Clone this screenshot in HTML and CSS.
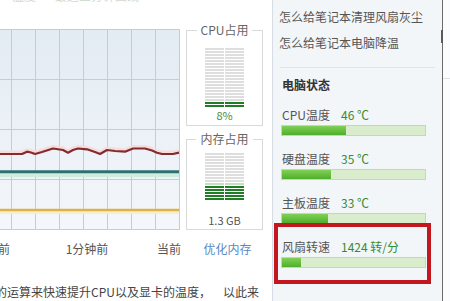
FILE: index.html
```html
<!DOCTYPE html>
<html lang="zh-CN">
<head>
<meta charset="utf-8">
<title>温度监控</title>
<link rel="stylesheet" href="styles.css">
</head>
<body>
<div class="window">
  <div class="main">
    <div class="caption"><div class="caption-text"><span class="caption-a">温度</span><span class="caption-b">最近三分钟曲线</span></div></div>
    <div class="monitor">
      <div class="chart">
        <svg class="chart-svg" width="180" height="201" viewBox="0 0 180 201">
          <defs>
            <linearGradient id="chartBg" x1="0" y1="0" x2="0" y2="1">
              <stop offset="0" stop-color="#e2ecf2"/>
              <stop offset="0.6" stop-color="#edf2f8"/>
              <stop offset="1" stop-color="#f4f7fb"/>
            </linearGradient>
          </defs>
          <rect width="180" height="201" fill="url(#chartBg)"/>
          <path d="M0 0.5H180M0 50.5H180M0 100.5H180M0 150.5H180M0 200.5H180M11.5 0V201M35.5 0V201M59.5 0V201M83.5 0V201M107.5 0V201M131.5 0V201M155.5 0V201M179.5 0V201" stroke="#c2cdd6" stroke-width="1" fill="none"/>
          <rect x="0" y="144" width="179" height="4" fill="#d0ecdd"/>
          <path d="M0 142.7H179" stroke="#2f7074" stroke-width="3"/>
          <rect x="0" y="182" width="179" height="3" fill="#f6edcc"/>
          <path d="M0 181H179" stroke="#ddb24a" stroke-width="2.4"/>
          <polyline fill="none" stroke="#f7dcdc" stroke-width="3" stroke-linejoin="round" transform="translate(0 -2)" points="0,125 22,125 27,122.7 31,123.5 35,125 42,123 53,119.5 63,121 68,123.7 73,121 78,119.5 87,120.3 95,123 100,125 107,121 115,122 125,122.7 133,119.5 145,119.5 152,121.5 157,123.7 162,125 173,125 179,123.7"/>
          <polyline fill="none" stroke="#852a2d" stroke-width="2.2" stroke-linejoin="round" points="0,125 22,125 27,122.7 31,123.5 35,125 42,123 53,119.5 63,121 68,123.7 73,121 78,119.5 87,120.3 95,123 100,125 107,121 115,122 125,122.7 133,119.5 145,119.5 152,121.5 157,123.7 162,125 173,125 179,123.7"/>
        </svg>
      </div>
      <div class="meters">
        <fieldset class="meter meter-cpu">
          <legend>CPU占用</legend>
          <div class="bars bars-cpu">
            <div class="bar-col"><div class="bar-used" style="height:6px"></div></div>
            <div class="bar-col"><div class="bar-used" style="height:6px"></div></div>
          </div>
          <div class="meter-value meter-value-cpu">8%</div>
        </fieldset>
        <fieldset class="meter meter-mem">
          <legend>内存占用</legend>
          <div class="bars bars-mem">
            <div class="bar-col"><div class="bar-used bar-used-partial" style="height:18px"></div></div>
            <div class="bar-col"><div class="bar-used bar-used-partial" style="height:18px"></div></div>
          </div>
          <div class="meter-value meter-value-mem">1.3 GB</div>
        </fieldset>
      </div>
    </div>
    <div class="axis">
      <span class="axis-t1">2分钟前</span>
      <span class="axis-t2">1分钟前</span>
      <span class="axis-t3">当前</span>
      <a class="axis-link" href="#">优化内存</a>
    </div>
    <p class="desc">的运算来快速提升CPU以及显卡的温度，<span class="desc-tail">以此来</span></p>
  </div>
  <aside class="side">
    <div class="tips">
      <a href="#">怎么给笔记本清理风扇灰尘</a>
      <a href="#">怎么给笔记本电脑降温</a>
    </div>
    <div class="sep"></div>
    <div class="status">
      <h3 class="status-title">电脑状态</h3>
      <div class="stat">
        <div class="stat-row"><span class="stat-label">CPU温度</span><span class="stat-value">46 ℃</span></div>
        <div class="meterbar"><div class="meterbar-fill" style="width:64px"></div></div>
      </div>
      <div class="stat">
        <div class="stat-row"><span class="stat-label">硬盘温度</span><span class="stat-value">35 ℃</span></div>
        <div class="meterbar"><div class="meterbar-fill" style="width:49px"></div></div>
      </div>
      <div class="stat">
        <div class="stat-row"><span class="stat-label">主板温度</span><span class="stat-value">33 ℃</span></div>
        <div class="meterbar"><div class="meterbar-fill" style="width:46px"></div></div>
      </div>
      <div class="stat">
        <div class="stat-row"><span class="stat-label">风扇转速</span><span class="stat-value">1424 转/分</span></div>
        <div class="meterbar"><div class="meterbar-fill" style="width:19px"></div></div>
        <span class="highlight"></span>
      </div>
    </div>
  </aside>
  <div class="edge"><span class="edge-grip"></span><span class="edge-line"></span></div>
</div>
</body>
</html>
```
FILE: styles.css
```css
html, body {
  margin: 0;
  padding: 0;
}
body {
  width: 450px;
  height: 301px;
  overflow: hidden;
  background: #ffffff;
  font-family: "Noto Sans CJK SC", "Noto Sans", sans-serif;
  color: #555;
}
.window {
  display: flex;
  height: 301px;
}
.main {
  width: 272px;
  flex: none;
  overflow: hidden;
  display: flex;
  flex-direction: column;
}
.caption {
  height: 29px;
  overflow: hidden;
}
.caption-text {
  display: flex;
  margin-top: -12px;
  font-size: 12px;
  line-height: 16px;
  color: #d3dccf;
}
.caption-a {
  margin-left: 12px;
}
.caption-b {
  margin-left: 19px;
}
.monitor {
  display: flex;
  align-items: flex-start;
}
.chart {
  width: 180px;
  height: 201px;
  flex: none;
}
.chart-svg {
  display: block;
}
.meters {
  margin-left: 6px;
  margin-top: -6px;
  width: 77px;
  display: flex;
  flex-direction: column;
}
.meter {
  margin: 0;
  border: 1px solid #d9d9d9;
  width: 77px;
  min-width: 0;
  box-sizing: border-box;
}
.meter legend {
  margin: 0 auto;
  padding: 0 4px;
  font-size: 12px;
  line-height: 14px;
  color: #666;
}
.meter-cpu {
  padding: 11px 0 3px;
}
.meter-mem {
  margin-top: 6px;
  padding: 7px 0 2px;
}
.bars {
  display: flex;
  justify-content: center;
  gap: 1px;
}
.bars-cpu {
  height: 60px;
}
.bars-mem {
  height: 48px;
}
.bar-col {
  width: 19px;
  display: flex;
  flex-direction: column;
  justify-content: flex-end;
  background: repeating-linear-gradient(to bottom, #dedede 0 2px, transparent 2px 3px);
}
.bar-used {
  background: repeating-linear-gradient(to bottom, #1f7d25 0 2px, transparent 2px 3px);
}
.bar-used-partial {
  background:
    linear-gradient(to bottom, #c3e0c3 0 2px, #ffffff 2px 3px) top / 100% 3px no-repeat,
    repeating-linear-gradient(to bottom, #1f7d25 0 2px, transparent 2px 3px);
}
.meter-value {
  text-align: center;
  font-size: 11px;
  line-height: 14px;
}
.meter-value-cpu {
  color: #4a8a44;
}
.meter-value-mem {
  margin-top: 12px;
  color: #555;
}
.axis {
  display: flex;
  margin-top: 11px;
  font-size: 12px;
  line-height: 16px;
  color: #555;
  white-space: nowrap;
}
.axis-t1 {
  width: 44px;
  margin-left: -34px;
  text-align: right;
  flex: none;
}
.axis-t2 {
  width: 44px;
  margin-left: 55px;
  text-align: center;
  flex: none;
}
.axis-t3 {
  width: 72px;
  text-align: right;
  flex: none;
}
.axis-link {
  width: 77px;
  margin-left: 8px;
  text-align: center;
  flex: none;
  color: #5a88c4;
  text-decoration: none;
}
.desc {
  margin: 27px 0 0 -5px;
  font-size: 12px;
  line-height: 16px;
  color: #444;
  white-space: nowrap;
}
.desc-tail {
  margin-left: 12px;
}
.side {
  width: 170px;
  flex: none;
  box-sizing: border-box;
  border-left: 1px solid #d6dde5;
  background: #f3f6f9;
  padding: 4px 7px 0 6px;
}
.tips a {
  display: block;
  font-size: 12px;
  line-height: 26px;
  color: #555;
  text-decoration: none;
  white-space: nowrap;
}
.sep {
  height: 1px;
  background: #e0e5ea;
  margin: 11px 0 0 1px;
}
.status {
  margin-top: 9px;
  padding-left: 3px;
}
.status-title {
  margin: 0 0 13.5px;
  font-size: 12px;
  line-height: 16px;
  font-weight: bold;
  color: #333;
}
.stat {
  position: relative;
  margin-bottom: 15px;
}
.stat-row {
  display: flex;
  font-size: 12px;
  line-height: 16px;
  white-space: nowrap;
}
.stat-label {
  width: 59px;
  color: #555;
}
.stat-value {
  color: #3b8a2e;
}
.meterbar {
  margin: 2px 0 0 -1px;
  width: 145px;
  height: 11px;
  box-sizing: border-box;
  border: 1px solid #c0dbad;
  background: #d9edcd;
}
.meterbar-fill {
  height: 100%;
  background: linear-gradient(to bottom, #80d056, #4fae2a);
}
.highlight {
  position: absolute;
  left: -8px;
  top: -16px;
  width: 157px;
  height: 61px;
  box-sizing: border-box;
  border: 4px solid #c2171e;
}
.edge {
  position: relative;
  width: 8px;
  flex: none;
  box-sizing: border-box;
  border-left: 1px solid #6b6b6b;
  background: #fbfcfd;
}
.edge-grip {
  position: absolute;
  left: -2px;
  top: 30px;
  width: 2px;
  height: 13px;
  background: #5a5a5a;
}
.edge-line {
  display: block;
  height: 1px;
  margin-top: 78px;
  background: #dde2e6;
}
```
